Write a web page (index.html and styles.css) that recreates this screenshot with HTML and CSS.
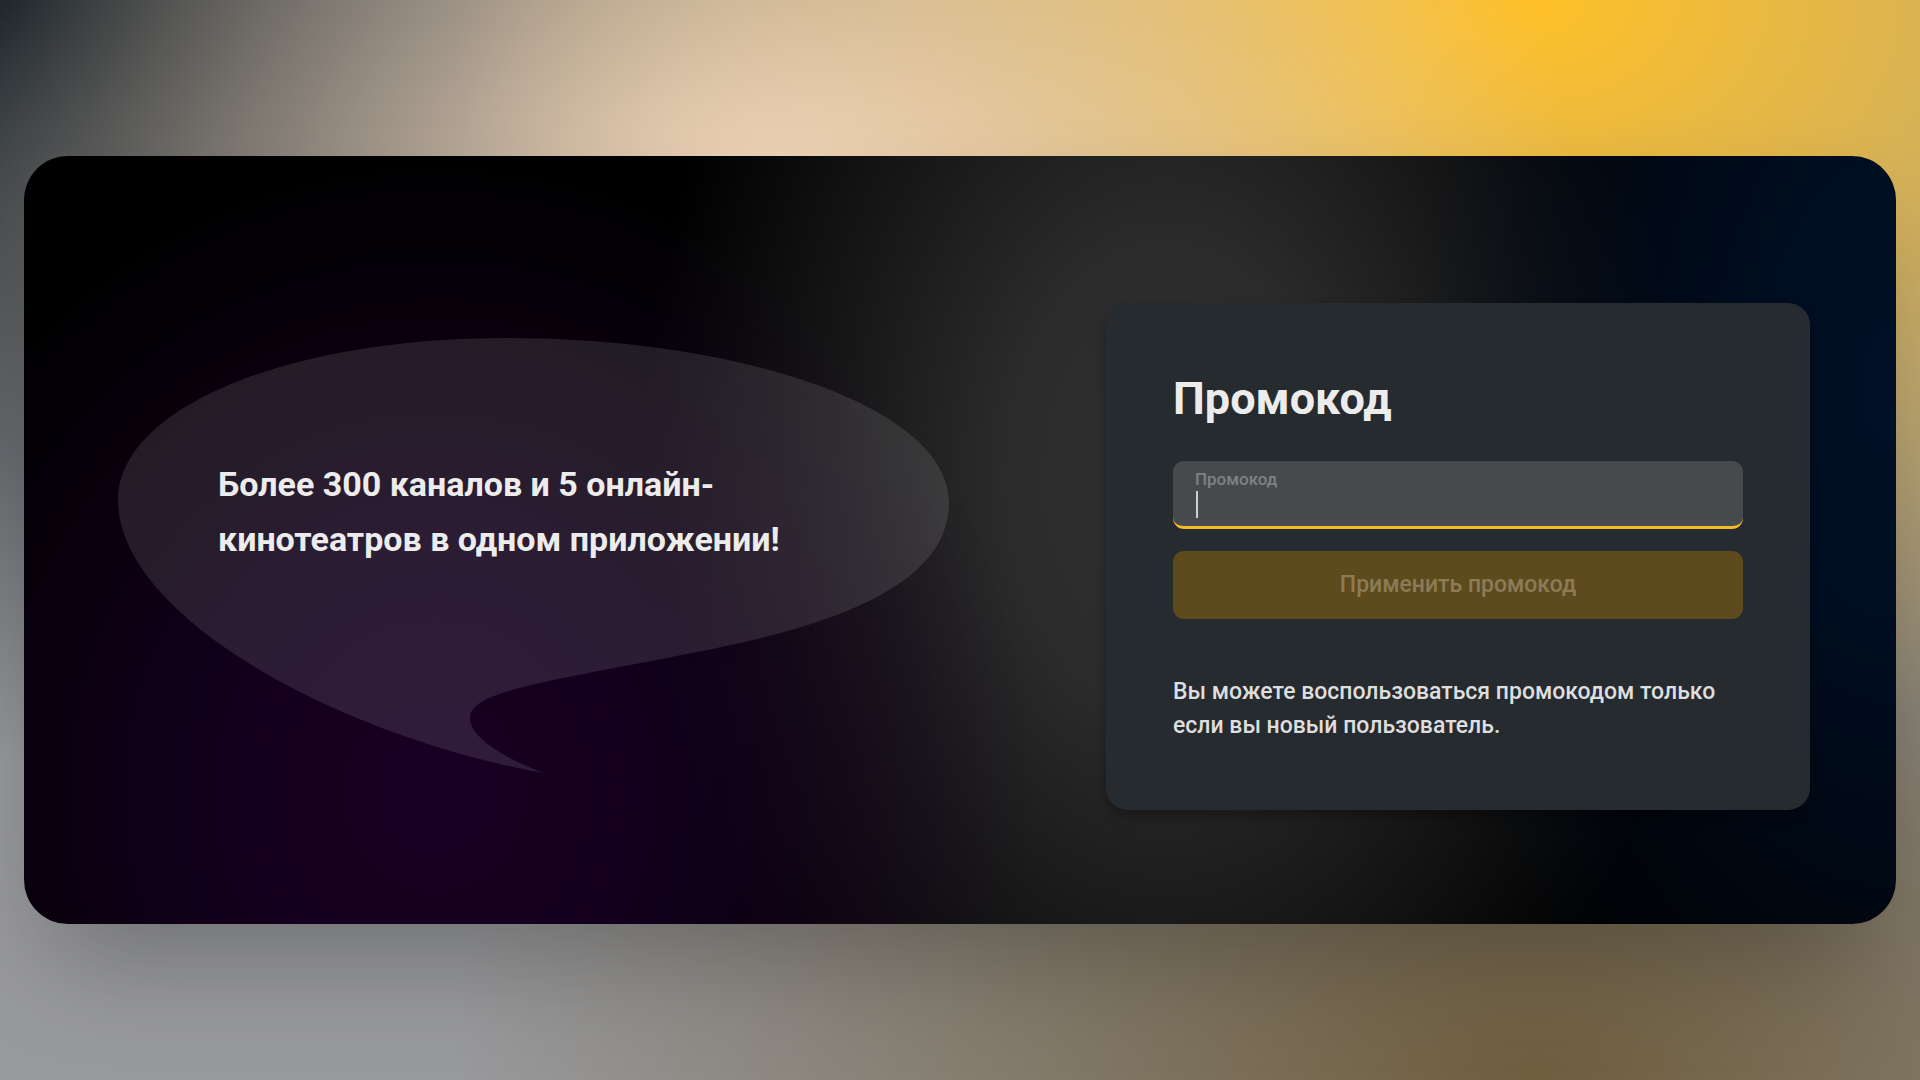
FILE: index.html
```html
<!DOCTYPE html>
<html lang="ru">
<head>
<meta charset="utf-8">
<title>Промокод</title>
<meta name="viewport" content="width=device-width, initial-scale=1">
<link rel="stylesheet" href="styles.css">
</head>
<body>
<main class="panel">
  <section class="bubble">
    <svg class="bubble-shape" viewBox="0 0 832 436" aria-hidden="true">
      <path d="M0 162C0 72 165 0 387 0C632 0 831 72 831 164C831 225 770 272 622 305C560 319 480 332 422 345C380 354 352 364 352 380C352 396 375 415 425 435C210 395 0 275 0 162Z"/>
    </svg>
    <p class="bubble-text">Более 300 каналов и 5 онлайн-кинотеатров в одном приложении!</p>
  </section>
  <form class="card">
    <h1 class="card-title">Промокод</h1>
    <div class="field">
      <label class="field-label" for="promo">Промокод</label>
      <input class="field-input" id="promo" name="promo" type="text" autocomplete="off">
    </div>
    <button class="submit" type="submit" disabled>Применить промокод</button>
    <p class="note">Вы можете воспользоваться промокодом только если вы новый пользователь.</p>
  </form>
</main>
</body>
</html>
```
FILE: styles.css
```css
*, *::before, *::after {
  box-sizing: border-box;
}

body {
  margin: 0;
  min-height: 100vh;
  display: flex;
  align-items: center;
  padding: 24px;
  font-family: Roboto, "Liberation Sans", sans-serif;
  color: #ececec;
  background-color: #999a9d;
  background-image:
    radial-gradient(at 40% 20%, #f6dabd 0, transparent 50%),
    radial-gradient(at 80% 0%, #ffc128 0, transparent 50%),
    radial-gradient(at 80% 100%, #6f5e3e 0, transparent 50%),
    radial-gradient(at 0% 0%, #1f272c 0, transparent 50%);
}

.panel {
  flex: 1;
  min-height: calc(100vh - 312px);
  display: grid;
  grid-template-columns: minmax(0, 832fr) minmax(0, 704fr);
  gap: 156px;
  align-items: center;
  padding: 32px 86px 0 94px;
  border-radius: 44px;
  background-color: #000;
  background-image:
    radial-gradient(32% 84% at 22% 83%, #180024 0, rgba(24, 0, 36, 0.85) 30%, rgba(24, 0, 36, 0) 100%),
    radial-gradient(26% 110% at 100% 30%, #001026 0, rgba(0, 16, 38, 0.85) 30%, rgba(0, 16, 38, 0) 100%),
    radial-gradient(28% 100% at 61% 42%, #303030 0, rgba(48, 48, 48, 0.9) 30%, rgba(48, 48, 48, 0) 100%);
  box-shadow: 0 56px 112px -24px rgba(0, 0, 0, 0.28);
}

.bubble {
  display: grid;
}

.bubble-shape {
  grid-area: 1 / 1;
  width: 100%;
  height: auto;
  fill: rgba(255, 255, 255, 0.11);
}

.bubble-text {
  grid-area: 1 / 1;
  margin: 0;
  padding: 119px 100px 0;
  font-size: 34px;
  line-height: 55px;
  font-weight: 700;
}

.card {
  display: flex;
  flex-direction: column;
  padding: 67px;
  border-radius: 22px;
  background: #262b2f;
  box-shadow: 0 6px 12px rgba(0, 0, 0, 0.3);
}

.card-title {
  margin: 0 0 33px;
  font-size: 45px;
  line-height: 58px;
  font-weight: 700;
}

.field {
  display: flex;
  flex-direction: column;
  margin-bottom: 22px;
  padding: 8px 22px 6px;
  border-bottom: 3px solid #f5ba28;
  border-radius: 11px;
  background: #474a4c;
}

.field-label {
  font-size: 17px;
  line-height: 20px;
  font-weight: 500;
  color: #7f8183;
}

.field-input {
  width: 100%;
  height: 31px;
  padding: 0;
  border: 0;
  outline: 0;
  font: inherit;
  font-size: 23px;
  color: #ececec;
  caret-color: transparent;
  background: linear-gradient(#cfcfcf, #cfcfcf) 1px 2px / 2px 27px no-repeat;
}

.submit {
  margin: 0 0 56px;
  height: 68px;
  padding: 0;
  border: 0;
  border-radius: 11px;
  font: inherit;
  font-size: 23px;
  font-weight: 500;
  color: #8c7b56;
  background: #5e4b1d;
}

.note {
  margin: 0;
  font-size: 23px;
  line-height: 34px;
  font-weight: 500;
  color: #dedede;
}
```
